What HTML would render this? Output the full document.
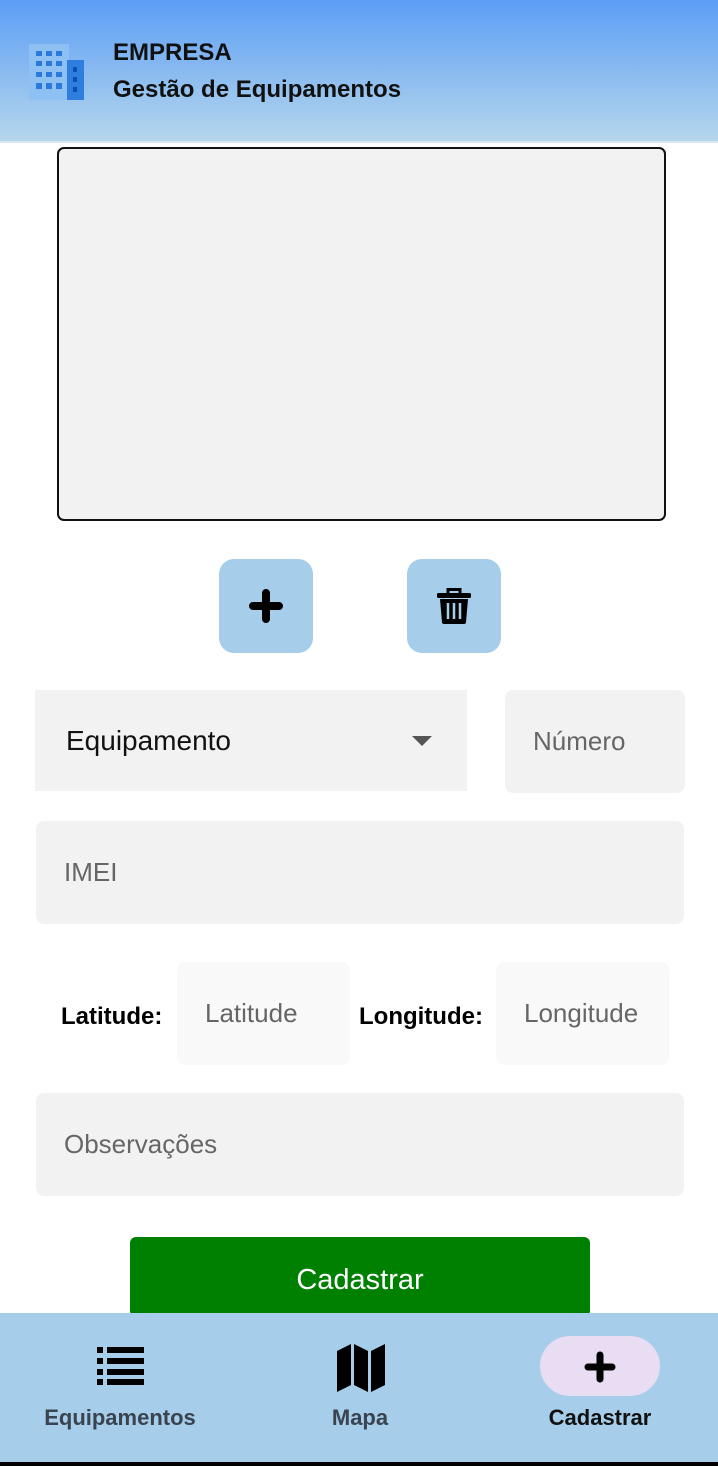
<!DOCTYPE html>
<html><head><meta charset="utf-8"><style>
*{margin:0;padding:0;box-sizing:border-box}
body{width:718px;height:1466px;position:relative;background:#fff;font-family:"Liberation Sans",Roboto,sans-serif;overflow:hidden}
.abs{position:absolute}
.hdr{left:0;top:0;width:718px;height:143px;background:linear-gradient(#5c9ef5,#b5d6ec);border-bottom:2px solid #d8e6ef}
.t{color:#111;font-weight:bold;font-size:24px}
.box{left:57px;top:147px;width:609px;height:374px;background:#f2f2f2;border:2px solid #111;border-radius:7px}
.btn{width:94px;height:94px;background:#a6cde9;border-radius:15px;display:flex;align-items:center;justify-content:center}
.fld{background:#f2f2f2;border-radius:8px;color:#666;font-size:26px;display:flex;align-items:center;padding-left:28px}
.lbl{font-weight:bold;font-size:24px;color:#000}
.nav{left:0;top:1313px;width:718px;height:149px;background:#a6cde9}
.nl{font-size:22px;font-weight:bold;color:#3a4450;text-align:center;width:240px}
</style></head><body>
<div class="abs hdr"></div>
<svg class="abs" style="left:27px;top:42px" width="58" height="58" viewBox="0 0 58 58">
<rect x="2" y="2" width="40" height="56" fill="#8ec0f3"/>
<rect x="40" y="18" width="17" height="40" fill="#2e7ee0"/>
<g fill="#2a78dc">
<rect x="9" y="9" width="6" height="5"/><rect x="19" y="9" width="6" height="5"/><rect x="29" y="9" width="6" height="5"/>
<rect x="9" y="19" width="6" height="5"/><rect x="19" y="19" width="6" height="5"/><rect x="29" y="19" width="6" height="5"/>
<rect x="9" y="30" width="6" height="5"/><rect x="19" y="30" width="6" height="5"/><rect x="29" y="30" width="6" height="5"/>
<rect x="9" y="41" width="6" height="6"/><rect x="19" y="41" width="6" height="6"/><rect x="29" y="41" width="6" height="6"/>
</g>
<g fill="#0d4fb0"><rect x="46" y="25" width="4" height="5"/><rect x="46" y="35" width="4" height="5"/><rect x="46" y="45" width="4" height="5"/></g>
</svg>
<div class="abs t" style="left:113px;top:39px">EMPRESA</div>
<div class="abs t" style="left:113px;top:76px">Gestão de Equipamentos</div>
<div class="abs box"></div>
<div class="abs btn" style="left:219px;top:559px"><svg width="40" height="40" viewBox="0 0 40 40"><path d="M20 7v26M7 20h26" stroke="#000" stroke-width="8" stroke-linecap="round"/></svg></div>
<div class="abs btn" style="left:407px;top:559px"><svg width="40" height="40" viewBox="0 0 40 40"><path d="M14 7V3.5h12V7" stroke="#000" stroke-width="3" fill="none"/><rect x="3" y="7" width="34" height="5" rx="1.5"/><path d="M6 13h28l-2 23a2 2 0 0 1-2 2H10a2 2 0 0 1-2-2z" fill="#000"/><path d="M14 17v16M20 17v16M26 17v16" stroke="#a6cde9" stroke-width="2.5"/></svg></div>
<div class="abs fld" style="left:35px;top:690px;width:432px;height:101px;border-radius:0;color:#111;font-size:28px;padding-left:31px">Equipamento</div>
<svg class="abs" style="left:412px;top:736px" width="20" height="10"><path d="M0 0h20L10 10z" fill="#555"/></svg>
<div class="abs fld" style="left:505px;top:690px;width:180px;height:103px">Número</div>
<div class="abs fld" style="left:36px;top:821px;width:648px;height:103px">IMEI</div>
<div class="abs lbl" style="left:61px;top:1003px">Latitude:</div>
<div class="abs fld" style="left:177px;top:962px;width:173px;height:103px;background:#f9f9f9">Latitude</div>
<div class="abs lbl" style="left:359px;top:1003px">Longitude:</div>
<div class="abs fld" style="left:496px;top:962px;width:173px;height:103px;background:#f9f9f9">Longitude</div>
<div class="abs fld" style="left:36px;top:1093px;width:648px;height:103px">Observações</div>
<div class="abs" style="left:130px;top:1237px;width:460px;height:80px;background:#008000;border-radius:6px;color:#fff;font-size:29px;text-align:center;padding-top:27px">Cadastrar</div>
<div class="abs nav"></div>
<div class="abs" style="left:0;top:1462px;width:718px;height:4px;background:#000"></div>
<svg class="abs" style="left:96px;top:1346px" width="50" height="40" viewBox="0 0 50 40"><g fill="#000"><rect x="1" y="1" width="6" height="6"/><rect x="11" y="1" width="37" height="6"/><rect x="1" y="12" width="6" height="6"/><rect x="11" y="12" width="37" height="6"/><rect x="1" y="23" width="6" height="6"/><rect x="11" y="23" width="37" height="6"/><rect x="1" y="33" width="6" height="6"/><rect x="11" y="33" width="37" height="6"/></g></svg>
<svg class="abs" style="left:336px;top:1343px" width="50" height="50" viewBox="0 0 50 50"><path d="M1 8l14-7v41L1 49zM18 1l14 7v41l-14-7zM35 8l14-7v41l-14 7z" fill="#000"/></svg>
<div class="abs" style="left:540px;top:1336px;width:120px;height:60px;border-radius:30px;background:#e8ddf3"></div>
<svg class="abs" style="left:582px;top:1349px" width="36" height="36" viewBox="0 0 36 36"><path d="M18 6v24M6 18h24" stroke="#000" stroke-width="7" stroke-linecap="round"/></svg>
<div class="abs nl" style="left:0;top:1405px">Equipamentos</div>
<div class="abs nl" style="left:240px;top:1405px">Mapa</div>
<div class="abs nl" style="left:480px;top:1405px;color:#111">Cadastrar</div>
</body></html>
